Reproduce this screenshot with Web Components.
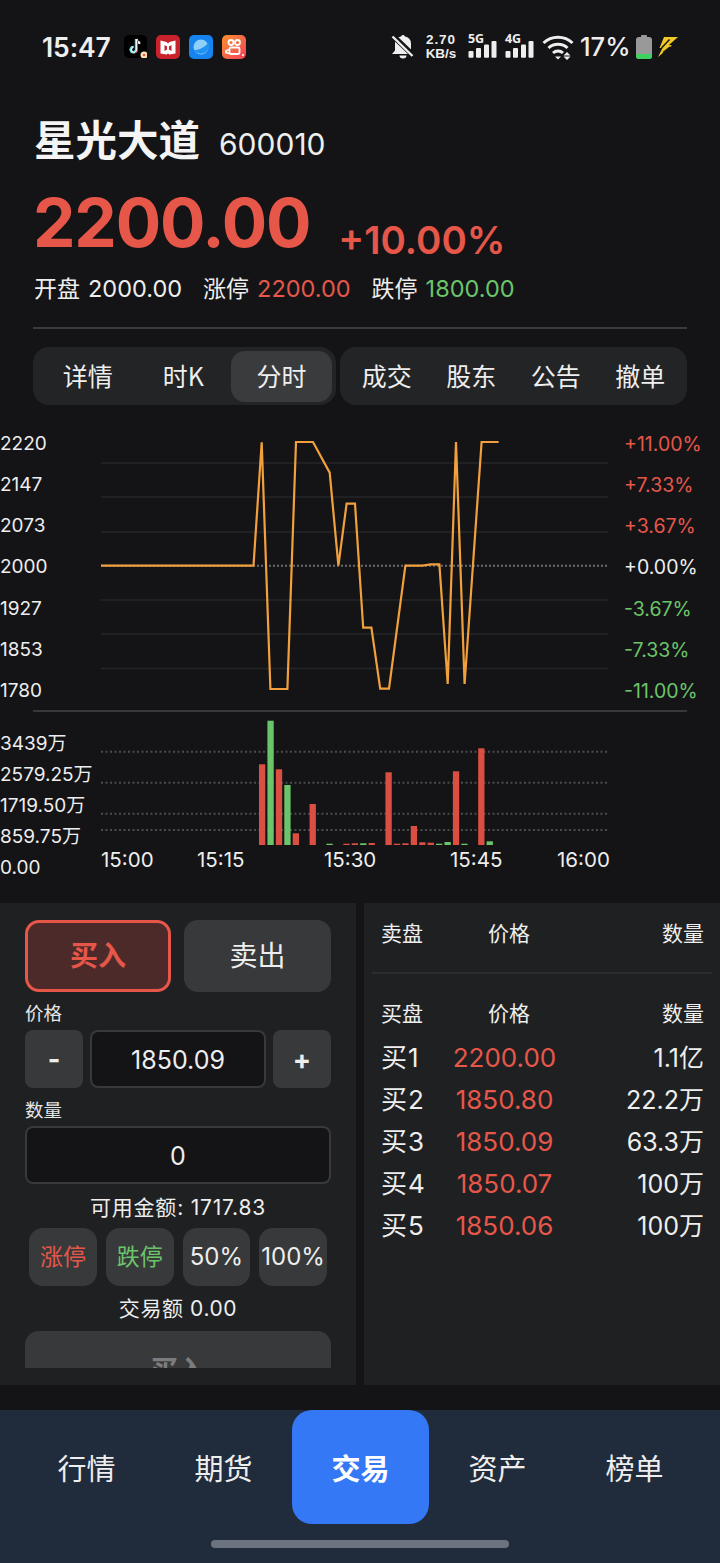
<!DOCTYPE html>
<html lang="zh"><head><meta charset="utf-8"><title>星光大道</title>
<style>
html,body{margin:0;padding:0;background:#141416;}
body{width:720px;height:1563px;overflow:hidden;font-family:Inter,"Noto Sans CJK SC",sans-serif;color:#eee;display:flex;flex-direction:column;}
</style></head><body>
<x-status></x-status>
<x-quote></x-quote>
<x-tabs></x-tabs>
<x-time-chart></x-time-chart>
<x-volume-chart></x-volume-chart>
<x-trade></x-trade>
<x-nav></x-nav>
<script>
function def(name,html){customElements.define(name,class extends HTMLElement{constructor(){super();this.attachShadow({mode:'open'}).innerHTML=html;}});}
const RED='#e6574a',GREEN='#6cc46a';
const BARS=`<svg viewBox="0 0 30 26"><g fill="#eee"><rect x="0.500" y="17" width="5" height="6.800" rx="1"/><rect x="8" y="14" width="5" height="9.800" rx="1"/><rect x="16" y="10.500" width="5" height="13.300" rx="1"/><rect x="23.500" y="7" width="5" height="16.800" rx="1"/></g></svg>`;
def('x-status',`<style>
:host{display:flex;align-items:center;height:94px;box-sizing:border-box;padding:0 42px 0 42px;color:#eee;flex:none}
.t{font:600 26.500px/1 Inter,sans-serif;width:69px;white-space:nowrap;letter-spacing:-.1px}
.apps{display:flex;gap:9px;margin-left:13px}
svg{display:block}
.r{margin-left:auto;display:flex;align-items:center}
.sp{display:flex;flex-direction:column;font:700 13.500px/14px "Liberation Sans",sans-serif;align-items:center;width:30px;margin-left:11px;color:#eee}
.sp span:first-child{letter-spacing:.9px}
.sig{position:relative;width:30px;height:26px;margin-left:12px}
.sig b{position:absolute;left:0;top:0;font:700 12.500px/10px "Open Sans",sans-serif;letter-spacing:-.2px}
.sig svg{width:30px;height:26px}
.pc{font:500 25.500px/1 Inter,sans-serif;margin-left:6px;width:48px;white-space:nowrap}
</style>
<div class="t">15:47</div>
<div class="apps">
<svg width="23" height="23" viewBox="0 0 23 23"><rect width="23" height="23" rx="5" fill="#000"/><path d="M12.3 4v10.6a2.7 2.7 0 1 1-2.7-2.7M12.3 4c.3 2.400 1.800 3.800 4 4" fill="none" stroke="#f4f4f4" stroke-width="2.400"/><path d="M11.300 4.500v10.100a2.700 2.700 0 1 1-2.700-2.700" fill="none" stroke="#3fe0e0" stroke-width="1"/><path d="M13.500 5.500v9.600a2.700 2.700 0 0 1-2.600 2.500" fill="none" stroke="#f0305a" stroke-width="1"/><circle cx="20" cy="20" r="3.500" fill="#ffe2b8"/><circle cx="20" cy="20" r="1.300" fill="#e8603c"/></svg>
<svg width="24" height="24" viewBox="0 0 24 24"><rect width="24" height="24" rx="5" fill="#c9222c"/><path d="M4.500 5.500l6 1.500L12 8.500 13.500 7l6-1.500v13l-6 1L12 18.500 10.500 19.500l-6-1z" fill="#fff"/><path d="M8.500 10v6l2.500-1.500v-3zM15.500 10v6L13 14.500v-3z" fill="#c9222c"/></svg>
<svg width="24" height="24" viewBox="0 0 24 24"><rect width="24" height="24" rx="5" fill="#1683ee"/><circle cx="12" cy="12" r="7.500" fill="#8fd0fa"/><path d="M4.500 15c5 .5 11-2.500 15-7.500 1 3 .5 7-2.500 9.500s-9 2.500-12.500-2z" fill="#1e93f2"/></svg>
<svg width="24" height="24" viewBox="0 0 24 24"><defs><linearGradient id="k" x1="0" y1="0" x2="1" y2="1"><stop offset="0" stop-color="#f9912f"/><stop offset="1" stop-color="#f2405a"/></linearGradient></defs><rect width="24" height="24" rx="5" fill="url(#k)"/><g fill="none" stroke="#fff" stroke-width="1.800"><circle cx="9" cy="7.500" r="2.500"/><circle cx="15.500" cy="7.500" r="2.500"/><rect x="7.500" y="12.500" width="10" height="6.500" rx="1.500"/><path d="M7 14.500l-3 1.500v1.500l3 1"/></g><circle cx="21" cy="20" r="1" fill="#fff"/></svg>
</div>
<div class="r">
<svg width="24" height="24" viewBox="0 0 24 24"><path d="M12 0a2 2 0 0 1 2 1.500 7 7 0 0 1 6 7v7l3 3.500H1l3-3.500v-7a7 7 0 0 1 6-7A2 2 0 0 1 12 0z" fill="#eee"/><path d="M8.500 20.500h7a3.500 3 0 0 1-7 0z" fill="#eee"/><path d="M1 0l22 21" stroke="#141416" stroke-width="5.500"/><path d="M1.500 1.500l20 19.500" stroke="#eee" stroke-width="2.400"/></svg>
<div class="sp"><span>2.70</span><span>KB/s</span></div>
<div class="sig"><b>5G</b>${BARS}</div>
<div class="sig" style="margin-left:7px"><b>4G</b>${BARS}</div>
<svg style="margin-left:7px" width="32" height="26" viewBox="0 0 32 26"><g fill="none" stroke="#eee" stroke-width="3"><path d="M1.500 9a21 21 0 0 1 29 0"/><path d="M6.500 14a14 14 0 0 1 19 0"/><path d="M11 19a7.500 7.500 0 0 1 10 0"/></g><path d="M13 22.500h6l-3 3z" fill="#eee"/><path d="M25 18l3.500 3.500h-7zM25 26l3.500-3.500h-7z" fill="#eee"/></svg>
<div class="pc">17%</div>
<svg style="margin-left:8px" width="16" height="24" viewBox="0 0 16 24"><rect x="5" y="0" width="6" height="3" rx="1" fill="#999"/><rect x="0" y="2" width="16" height="22" rx="3" fill="#999"/><path d="M0 19h16v2a3 3 0 0 1-3 3H3a3 3 0 0 1-3-3z" fill="#3ed160"/></svg>
<svg style="margin-left:6px" width="20" height="20" viewBox="0 0 20 20"><path d="M6 0h14L11 8l3 .500L0 20 4.500 11H1.500z" fill="#f0c828"/><path d="M3.500 11l8-8.500M5 15.500l7-5.500" stroke="#141416" stroke-width="1.400"/></svg>
</div>`);
def('x-quote',`<style>
:host{display:block;padding:14px 33px 0 35px;flex:none}
.a{display:flex;align-items:center;gap:19px;height:60px;line-height:60px}
.n{font:700 41.500px/60px "Noto Sans CJK SC",sans-serif;color:#f4f4f4;margin-left:-1px}
.c{font:400 30px/60px Inter,sans-serif;color:#eee;padding-top:6px;height:54px}
.b{display:flex;height:103px;box-sizing:border-box;padding-top:6px}
.p{font:700 67.500px/97px Inter,sans-serif;color:${RED};letter-spacing:-1.200px;margin-left:-2px}
.q{font:600 38.500px/61px Inter,sans-serif;color:${RED};margin-left:28px;align-self:flex-end;white-space:nowrap}
.d{display:flex;height:34px;align-items:baseline;font:400 23.500px/32px Inter,sans-serif;color:#eee;margin-left:-1px}
.d span{font:400 23px/32px "Noto Sans CJK SC",sans-serif;margin-right:8px}
.d i{font-style:normal;margin-right:21px}
hr{border:0;height:2px;background:#3a3b3d;margin:22px 0 0 -2px}
</style>
<div class="a"><span class="n">星光大道</span><span class="c">600010</span></div>
<div class="b"><span class="p">2200.00</span><span class="q">+10.00%</span></div>
<div class="d"><span>开盘</span><i>2000.00</i><span>涨停</span><i style="color:${RED}">2200.00</i><span>跌停</span><i style="color:${GREEN}">1800.00</i></div>
<hr>`);
def('x-tabs',`<style>
:host{display:flex;margin:18px 33px 0 33px;height:58px;gap:4px;flex:none;font:400 25px/1 "Noto Sans CJK SC",sans-serif;color:#eee}
.g{display:flex;background:#232426;border-radius:16px;align-items:center;box-sizing:border-box;height:58px}
.g1{width:303px;padding:0 4px 0 7px}.g2{flex:1;padding:0 4.500px}
span{display:flex;align-items:center;justify-content:center;height:51px;border-radius:14px;flex:1;box-sizing:border-box;padding-bottom:2px}
.on{background:#3a3b3d;flex:none;width:101px}
</style>
<div class="g g1"><span>详情</span><span>时K</span><span class="on">分时</span></div>
<div class="g g2"><span>成交</span><span>股东</span><span>公告</span><span>撤单</span></div>`);
const pts="101,565.700 253.500,565.700 261.700,442.300 270.400,689 287.400,689 296,442 313,442 329.700,472.700 338.400,565.700 346.600,503.700 355,503.700 363.200,627.700 371.400,627.700 380.200,688.700 389,688.700 405.400,565.700 422.400,565.700 430.700,564.300 439.400,564.300 447.700,684 456,442 464.600,684 481.600,442 498.600,442";
def('x-time-chart',`<style>
:host{display:grid;grid-template-columns:101px 507px 1fr;grid-template-rows:305px 2px;height:307px;flex:none;font:400 19px/24px Inter,sans-serif;color:#eee}
.l,.r{display:flex;flex-direction:column;justify-content:space-between;padding:27px 0 7px}
.r{padding-left:16px;white-space:nowrap;font-size:19.500px}
.up{color:${RED}}.dn{color:${GREEN}}
svg{display:block}
.rule{grid-column:1/4;height:2px;background:#37383a;margin:0 33px}
</style>
<div class="l"><span>2220</span><span>2147</span><span>2073</span><span>2000</span><span>1927</span><span>1853</span><span>1780</span></div>
<svg width="507" height="305" viewBox="101 405 507 305">
<g stroke="#252628" stroke-width="1.500"><path d="M101 463H608M101 497H608M101 532H608M101 600H608M101 634H608M101 668.500H608"/></g>
<path d="M101 565.700H608" stroke="#6a6b6d" stroke-width="2" stroke-dasharray="2 2"/>
<polyline points="${pts}" fill="none" stroke="#f2a03d" stroke-width="2.200"/>
</svg>
<div class="r"><span class="up">+11.00%</span><span class="up">+7.33%</span><span class="up">+3.67%</span><span>+0.00%</span><span class="dn">-3.67%</span><span class="dn">-7.33%</span><span class="dn">-11.00%</span></div>
<div class="rule"></div>`);
const bars=[[0,764.3,1],[1,720.7,0],[2,769.3,1],[3,785,0],[4,833.3,1],[6,804,1],[8,843.7,0],[10,843.7,1],[11,843.3,1],[12,843.3,0],[13,843,1],[15,772.3,1],[16,843.7,1],[17,843.3,1],[18,826,1],[19,842.3,1],[20,842.7,1],[21,843.7,0],[22,842,0],[23,771.3,1],[24,843.7,0],[26,748.3,1],[27,841.3,0]];
const rects=bars.map(([i,t,r])=>`<rect x="${(259+8.43*i).toFixed(2)}" y="${t}" width="6.300" height="${(845-t).toFixed(1)}" fill="${r?'#da4f41':GREEN}"/>`).join('');
def('x-volume-chart',`<style>
:host{display:grid;grid-template-columns:101px 507px;height:178px;flex:none;font:400 19px/24px Inter,"Noto Sans CJK SC",sans-serif;color:#eee}
.l{display:flex;flex-direction:column;justify-content:space-between;padding:20px 0 10px;white-space:nowrap;width:101px}
svg{display:block}
.t{display:flex;height:30px;line-height:30px;font-size:20.500px}
.t span{width:0;white-space:nowrap}
</style>
<div class="l"><span>3439万</span><span>2579.25万</span><span>1719.50万</span><span>859.75万</span><span>0.00</span></div>
<div>
<svg width="507" height="133" viewBox="101 712 507 133">
<g stroke="#4a4b4e" stroke-width="2" stroke-dasharray="2 2.500"><path d="M101 751.700H608M101 782.700H608M101 813.700H608M101 830H608"/></g>
${rects}
</svg>
<div class="t"><span>15:00</span><span style="margin-left:96px">15:15</span><span style="margin-left:127px">15:30</span><span style="margin-left:126px">15:45</span><span style="margin-left:107px">16:00</span></div>
</div>`);
def('x-order',`<style>
:host{display:block;width:356px;height:482px;background:#1f2022;box-sizing:border-box;padding:17px 25px 17px;font:400 22px/1 Inter,"Noto Sans CJK SC",sans-serif;color:#eee;flex:none}
.clip{height:448px;overflow:hidden;display:flex;flex-direction:column}
.sw{display:flex;gap:13px;height:72px;flex:none}
.sw div{width:147px;box-sizing:border-box;border-radius:14px;display:flex;align-items:center;justify-content:center;font-size:28px;background:#38393b}
.sw .buy{width:146px;border:3px solid ${RED};background:#4b2a29;color:${RED};font-weight:700}
.lab{font-size:18.500px;line-height:24px;height:24px;margin-top:9px;color:#e6e6e6}
.lab.q{margin-top:10px}
.pr{display:flex;gap:7px;height:58px;margin-top:5px;flex:none}
.b{width:58px;background:#38393b;border-radius:8px;display:flex;align-items:center;justify-content:center;font-size:27px;font-weight:700}
.in{flex:1;background:#141416;border:2px solid #38393b;border-radius:8px;display:flex;align-items:center;justify-content:center;font-size:25px;box-sizing:border-box;padding-top:2px}
.qty{height:58px;flex:none;margin-top:4px}
.av{text-align:center;height:24px;line-height:24px;margin-top:12px;font-size:21px;letter-spacing:.8px;width:306px;white-space:nowrap}
.q4{display:flex;gap:9px;margin:8px 4px 0;height:58px;flex:none}
.q4 div{flex:1;background:#38393b;border-radius:14px;display:flex;align-items:center;justify-content:center;font-size:23px;white-space:nowrap}
.q4 .n{font-size:24px}
.tot{text-align:center;height:24px;line-height:24px;margin-top:11px;font-size:21px;letter-spacing:.6px;white-space:nowrap}
.sub{height:80px;margin-top:10px;background:#38393b;border-radius:14px;flex:none;display:flex;align-items:center;justify-content:center;font-size:28px;font-weight:700;color:#7c7c7e}
</style>
<div class="clip">
<div class="sw"><div class="buy">买入</div><div>卖出</div></div>
<div class="lab">价格</div>
<div class="pr"><div class="b">-</div><div class="in">1850.09</div><div class="b">+</div></div>
<div class="lab q">数量</div>
<div class="in qty">0</div>
<div class="av">可用金额: 1717.83</div>
<div class="q4"><div style="color:${RED}">涨停</div><div style="color:${GREEN}">跌停</div><div class="n">50%</div><div class="n">100%</div></div>
<div class="tot">交易额 0.00</div>
<div class="sub">买入</div>
</div>`);
def('x-book',`<style>
:host{display:block;flex:1;background:#1f2022;font:400 21px/1 Inter,"Noto Sans CJK SC",sans-serif;color:#eee}
.h,.r{display:grid;grid-template-columns:52px 1fr 110px;padding:0 16px 0 17px;align-items:center}
.h{height:42px}
.m{text-align:center;padding-right:9px}
.e{text-align:right}
.sep{height:2px;background:#2c2d2f;margin:18px 8px 18px}
.r{height:42px;font-size:25px}
.r .m{color:${RED};font-size:26px;padding-right:18px;white-space:nowrap}
.r span:first-child{font-size:26px;letter-spacing:1px;white-space:nowrap}
.top{margin-top:9px}
.bh{margin-bottom:3px}
</style>
<div class="h top"><span>卖盘</span><span class="m">价格</span><span class="e">数量</span></div>
<div class="sep"></div>
<div class="h bh"><span>买盘</span><span class="m">价格</span><span class="e">数量</span></div>
<div class="r"><span>买1</span><span class="m">2200.00</span><span class="e">1.1亿</span></div>
<div class="r"><span>买2</span><span class="m">1850.80</span><span class="e">22.2万</span></div>
<div class="r"><span>买3</span><span class="m">1850.09</span><span class="e">63.3万</span></div>
<div class="r"><span>买4</span><span class="m">1850.07</span><span class="e">100万</span></div>
<div class="r"><span>买5</span><span class="m">1850.06</span><span class="e">100万</span></div>`);
def('x-trade',`<style>:host{display:flex;gap:8px;height:482px;margin-top:13px;flex:none}</style><x-order></x-order><x-book></x-book>`);
def('x-nav',`<style>
:host{display:block;margin-top:25px;flex:1;background:#202b3b;font:400 29px/1 "Noto Sans CJK SC",sans-serif;color:#eee}
.tabs{display:grid;grid-template-columns:repeat(5,137px);padding-left:18px;height:114px}
.tabs div{display:flex;align-items:center;justify-content:center;border-radius:20px}
.on{background:#3478f6;font-weight:700;color:#fff}
.bar{width:298px;height:8px;border-radius:4px;background:#6b7280;margin:16px auto 0}
</style>
<div class="tabs"><div>行情</div><div>期货</div><div class="on">交易</div><div>资产</div><div>榜单</div></div>
<div class="bar"></div>`);
</script>
</body></html>
